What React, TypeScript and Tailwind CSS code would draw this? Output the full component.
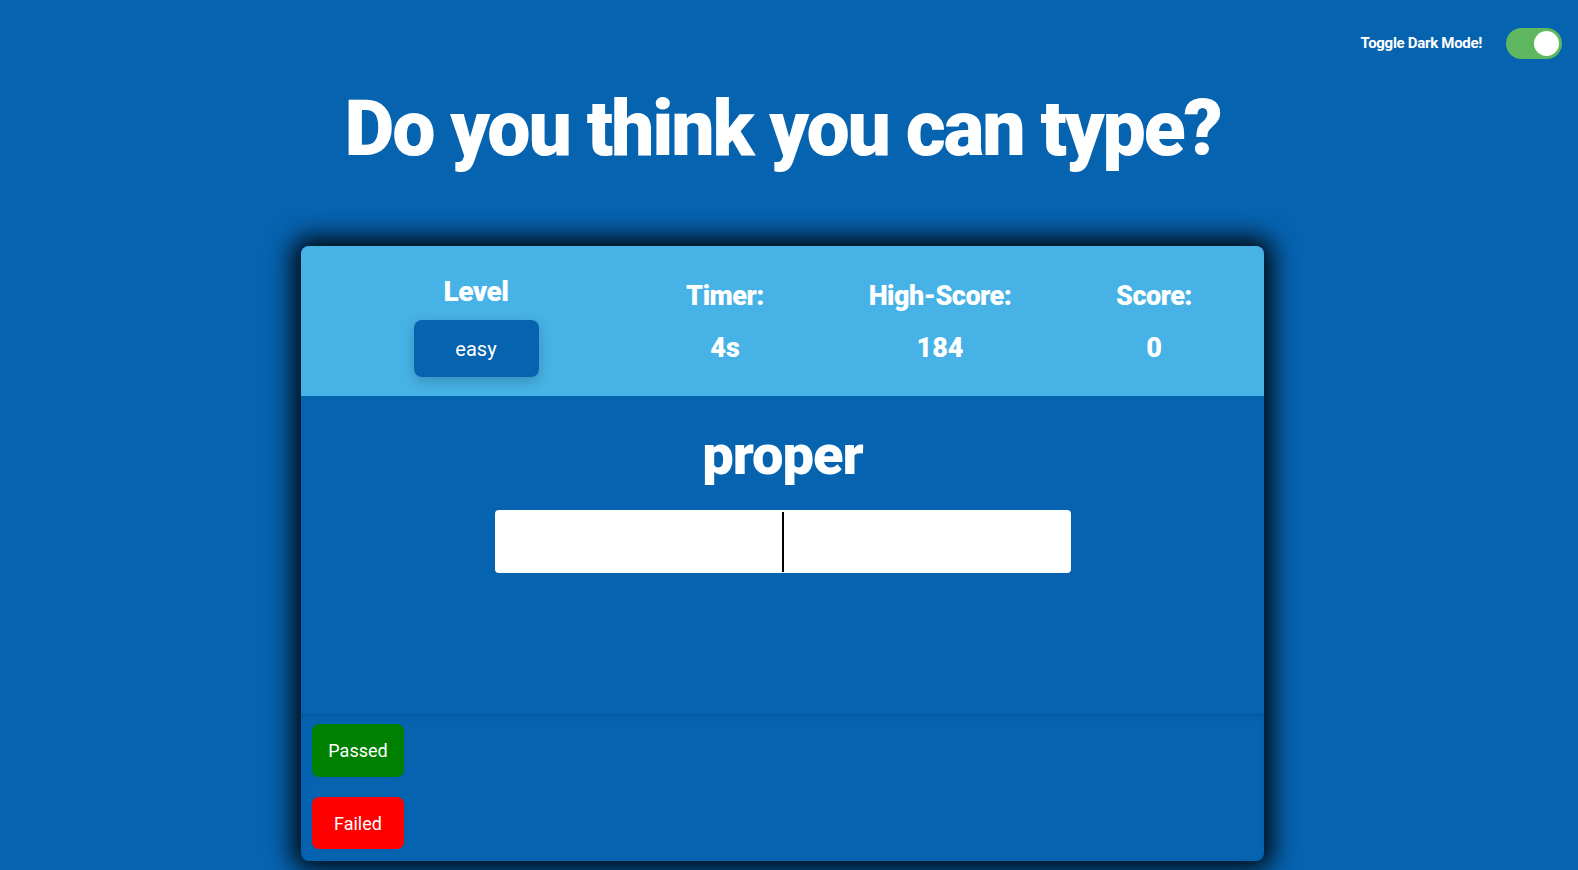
export default function App() {
  return (
    <div
      className="w-full h-[870px] overflow-hidden bg-[#0663b0] text-white"
      style={{ fontFamily: "Roboto, 'Noto Sans', sans-serif" }}
    >
      {/* top bar */}
      <div className="flex justify-end items-center h-[31px] mt-[28px] pr-[16px]">
        <span className="text-[15px] font-bold tracking-[-0.3px] mr-[24px]">Toggle Dark Mode!</span>
        <div className="w-[56px] h-[31px] rounded-full bg-[#5fb760] flex items-center justify-end pr-[3px]">
          <div className="w-[25px] h-[25px] rounded-full bg-white"></div>
        </div>
      </div>

      <div className="pr-[13px] flex flex-col items-center">
        <h1 className="mt-[22px] text-[77px] leading-[96px] font-black tracking-[-2.2px]">
          Do you think you can type?
        </h1>

        <div className="mt-[69px] w-[963px] rounded-lg overflow-hidden shadow-[0_0_24px_9px_rgba(0,0,0,0.9)]">
          {/* stats */}
          <div className="h-[150px] bg-[#47b2e5] flex">
            <div className="w-[350px] flex flex-col items-center pt-[29px]">
              <div className="text-[28px] leading-[34px] font-black tracking-[-0.5px]">Level</div>
              <button className="mt-[11px] w-[125px] h-[57px] rounded-lg bg-[#0663b0] text-[20px] shadow-[0_4px_12px_rgba(0,0,0,0.2)]">
                easy
              </button>
            </div>
            <div className="w-[148px] flex flex-col items-center pt-[33px]">
              <div className="text-[27px] leading-[34px] font-black tracking-[-0.5px]">Timer:</div>
              <div className="mt-[18px] text-[27px] leading-[34px] font-black">4s</div>
            </div>
            <div className="w-[282px] flex flex-col items-center pt-[33px]">
              <div className="text-[27px] leading-[34px] font-black tracking-[-0.5px]">High-Score:</div>
              <div className="mt-[18px] text-[27px] leading-[34px] font-black">184</div>
            </div>
            <div className="w-[146px] flex flex-col items-center pt-[33px]">
              <div className="text-[27px] leading-[34px] font-black tracking-[-0.5px]">Score:</div>
              <div className="mt-[18px] text-[27px] leading-[34px] font-black">0</div>
            </div>
          </div>

          {/* word + input */}
          <div className="h-[318px] flex flex-col items-center pt-[25px]">
            <div className="text-[56px] leading-[64px] font-black tracking-[-1px] translate-y-[2px]">proper</div>
            <div className="mt-[25px] w-[576px] h-[63px] bg-white rounded-[4px] flex justify-center items-center">
              <div className="w-[2px] h-[60px] bg-black"></div>
            </div>
          </div>

          {/* results */}
          <div className="border-t border-[#0558a2] shadow-[inset_0_3px_4px_rgba(0,0,0,0.08)] flex flex-col gap-[20px] pl-[11px] pt-[9px] pb-[12px]">
            <div className="w-[92px] h-[53px] rounded-[7px] bg-[#008000] flex items-center justify-center text-[18px]">
              Passed
            </div>
            <div className="w-[92px] h-[52px] rounded-[7px] bg-[#ff0000] flex items-center justify-center text-[18px]">
              Failed
            </div>
          </div>
        </div>
      </div>
    </div>
  );
}
